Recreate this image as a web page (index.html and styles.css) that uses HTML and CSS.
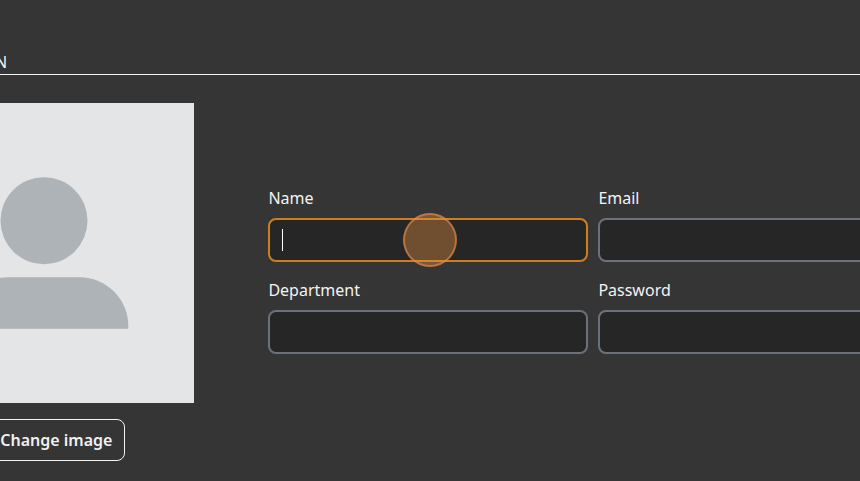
FILE: index.html
```html
<!DOCTYPE html>
<html lang="en">
<head>
<meta charset="utf-8">
<title>Profile</title>
<link rel="stylesheet" href="styles.css">
</head>
<body>
<header class="section-head"><span class="section-title">N</span></header>
<main class="content">
  <section class="photo">
    <svg class="avatar" viewBox="0 0 300 300" aria-hidden="true">
      <rect width="300" height="300" fill="#e3e5e6"/>
      <circle cx="150" cy="117.700" r="43.500" fill="#aeb3b7"/>
      <path d="M65.500 225.700V223A48.500 48.500 0 0 1 114 174.300h71.500A48.700 48.700 0 0 1 234.300 223v2.700z" fill="#aeb3b7"/>
    </svg>
    <button class="change" type="button">Change image</button>
  </section>
  <form class="fields">
    <div class="field"><span class="label">Name</span>
      <div class="input focused"><span class="caret"></span><span class="pointer"></span></div></div>
    <div class="field"><span class="label">Email</span><div class="input"></div></div>
    <div class="field"><span class="label">Department</span><div class="input"></div></div>
    <div class="field"><span class="label">Password</span><div class="input"></div></div>
  </form>
</main>
</body>
</html>
```
FILE: styles.css
```css
* {
  box-sizing: border-box;
}

body {
  margin: 0;
  height: 481px;
  overflow: hidden;
  background: #353535;
  color: #f3f3f3;
  font: 16px/24px "Noto Sans", sans-serif;
}

.section-head {
  display: flex;
  align-items: flex-end;
  height: 75px;
  border-bottom: 1px solid #f5f5f5;
}

.section-title {
  margin-left: -5px;
}

.content {
  display: flex;
  align-items: flex-start;
  gap: 74px;
  width: 1024px;
  margin-left: -106px;
  padding-top: 28px;
}

.photo {
  display: flex;
  flex: none;
  flex-direction: column;
  align-items: center;
  gap: 16px;
  width: 300px;
}

.avatar {
  display: block;
  width: 300px;
  height: 300px;
}

.change {
  width: 162px;
  height: 42px;
  padding: 0 11.6px;
  border: 1px solid #f3f3f3;
  border-radius: 8px;
  background: transparent;
  color: #f0f0f0;
  font: 600 16px/24px "Noto Sans", sans-serif;
  text-align: right;
  white-space: nowrap;
}

.fields {
  display: grid;
  flex: none;
  grid-template-columns: 320px 320px;
  gap: 16px 10px;
  padding-top: 83px;
}

.field {
  display: flex;
  flex-direction: column;
  gap: 8px;
}

.label {
  padding-left: 0.4px;
}

.input {
  position: relative;
  display: flex;
  align-items: center;
  height: 44px;
  padding: 0 12px;
  border: 2px solid #6b717b;
  border-radius: 8px;
  background: #262626;
}

.focused {
  border-color: #cd7f1f;
}

.caret {
  width: 1px;
  height: 22px;
  background: #fff;
}

.pointer {
  position: absolute;
  top: -7.5px;
  left: 132.5px;
  width: 54px;
  height: 54px;
  border: 2px solid rgba(230, 140, 75, 0.6);
  border-radius: 50%;
  background: rgba(224, 139, 66, 0.4);
}
```
